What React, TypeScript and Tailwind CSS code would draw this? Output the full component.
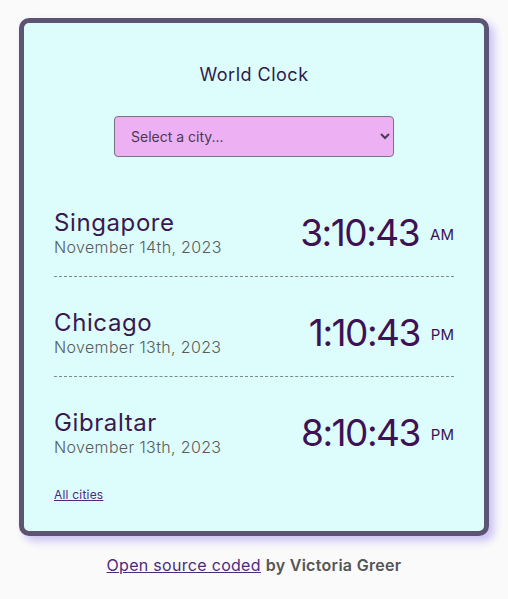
import React from 'react';

interface CityTime {
  name: string;
  date: string;
  time: string;
  meridiem: string;
}

const cities: CityTime[] = [
  { name: 'Singapore', date: 'November 14th, 2023', time: '3:10:43', meridiem: 'AM' },
  { name: 'Chicago', date: 'November 13th, 2023', time: '1:10:43', meridiem: 'PM' },
  { name: 'Gibraltar', date: 'November 13th, 2023', time: '8:10:43', meridiem: 'PM' },
];

const App: React.FC = () => {
  return (
    <div className="min-h-screen bg-[#fafafa] pt-[18px] font-['Inter',sans-serif]">
      <div className="mx-auto w-[470px] rounded-[10px] border-[5px] border-[#5d5473] bg-[#dcfdfc] px-[30px] pt-[38px] pb-[26px] shadow-[5px_5px_8px_#c9c0f3]">
        <h1 className="text-center text-[18px] leading-[27px] tracking-[0.5px] text-[#2e1a4c]">World Clock</h1>

        <div className="mt-[28px] flex justify-center">
          <select className="h-[41px] w-[280px] rounded-[4px] border border-[#7a7380] bg-[#edb0f2] px-[12px] text-[14px] text-[#4a3a55]">
            <option>Select a city...</option>
          </select>
        </div>

        <div className="mt-[20px]">
          {cities.map((city, i) => (
            <div
              key={city.name}
              className={`flex items-center justify-between pt-[31px] pb-[19px] ${
                i < cities.length - 1 ? 'border-b border-dashed border-[#7d8a8a]' : ''
              }`}
            >
              <div>
                <div className="text-[24px] leading-[30px] tracking-[0.6px] text-[#3a1850]">{city.name}</div>
                <div className="text-[16px] leading-[19px] tracking-[0.35px] font-light text-[#5b5b5b]">{city.date}</div>
              </div>
              <div className="flex items-center text-[#3d1153]">
                <span className="text-[37px] leading-[48px] tracking-[-1.5px]">{city.time}</span>
                <span className="ml-[11px] mt-[6px] text-[15px]">{city.meridiem}</span>
              </div>
            </div>
          ))}
        </div>

        <a href="#" className="mt-[10px] inline-block text-[12px] tracking-[0.2px] text-[#4d2a82] underline">
          All cities
        </a>
      </div>

      <p className="mt-[17px] text-center text-[16px] leading-[24px] tracking-[0.3px] text-[#555]">
        <a href="#" className="text-[#4d2a82] underline">
          Open source coded
        </a>{' '}
        <span className="font-semibold">by Victoria Greer</span>
      </p>
    </div>
  );
};

export default App;
